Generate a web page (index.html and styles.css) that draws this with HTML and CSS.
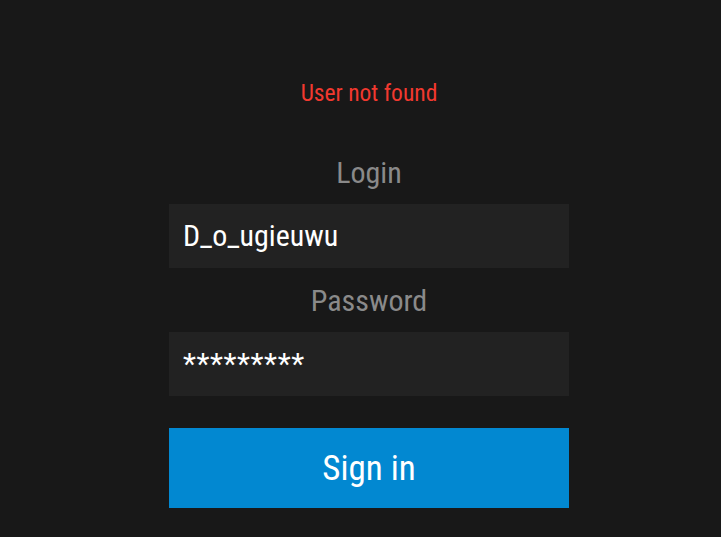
FILE: index.html
```html
<!DOCTYPE html>
<html>
<head>
<meta charset="utf-8">
<link rel="stylesheet" href="styles.css">
</head>
<body>
<div class="page">
  <form class="form">
    <div class="error">User not found</div>
    <label class="label">Login</label>
    <div class="field">D_o_ugieuwu</div>
    <label class="label">Password</label>
    <div class="field pw">*********</div>
    <button type="button" class="btn">Sign in</button>
  </form>
</div>
</body>
</html>
```
FILE: styles.css
```css
html, body {
  margin: 0;
  padding: 0;
  background: #181818;
  height: 100%;
}
body {
  font-family: "Roboto", "Liberation Sans", sans-serif;
  font-stretch: 87%;
}
.page {
  padding-left: 17px;
  display: flex;
  justify-content: center;
}
.form {
  width: 400px;
  display: flex;
  flex-direction: column;
  align-items: stretch;
  padding-top: 78px;
}
.error {
  color: #f2392f;
  font-size: 23.5px;
  line-height: 30px;
  text-align: center;
  margin-bottom: 47px;
}
.label {
  color: #8a8a8a;
  font-size: 30px;
  line-height: 36px;
  text-align: center;
  margin-bottom: 13px;
}
.field {
  background: #222222;
  height: 64px;
  box-sizing: border-box;
  padding: 0 14px;
  color: #ffffff;
  font-size: 30px;
  line-height: 64px;
  margin-bottom: 15px;
}
.field.pw {
  margin-bottom: 32px;
  letter-spacing: 0.6px;
}
.btn {
  height: 80px;
  background: #0288d1;
  border: none;
  color: #ffffff;
  font-family: inherit;
  font-stretch: 87%;
  font-size: 35px;
  padding: 0;
}
```
